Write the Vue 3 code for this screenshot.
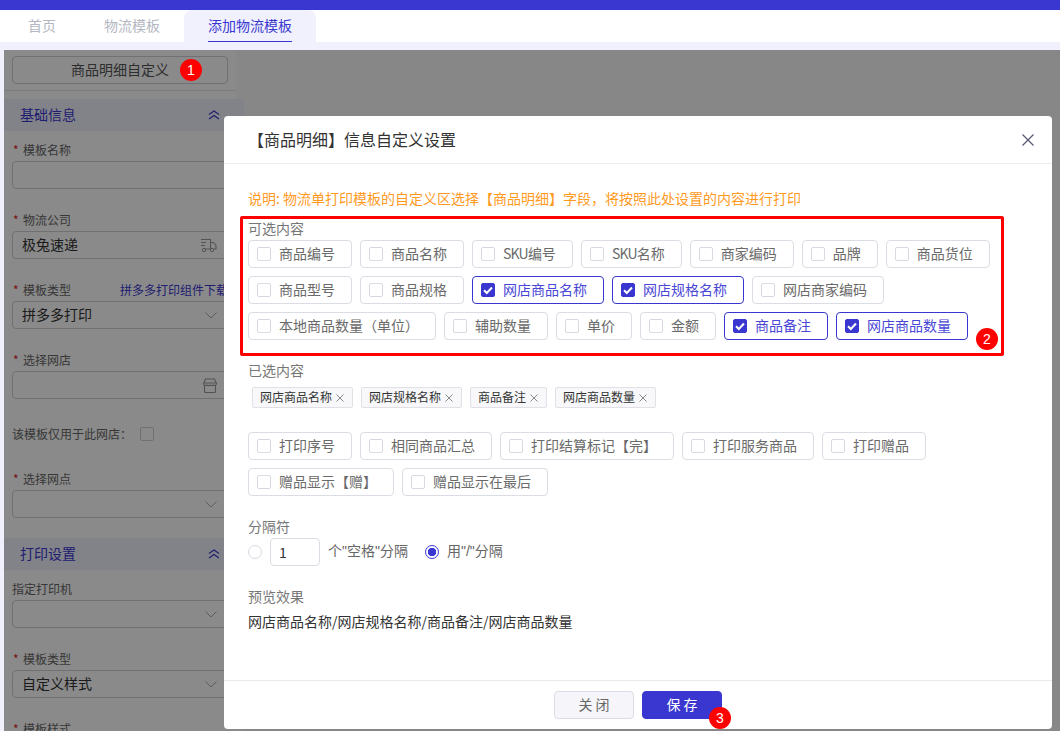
<script setup>
const available = [
  [{t:'商品编号'},{t:'商品名称'},{p:'SKU',t:'编号'},{p:'SKU',t:'名称'},{t:'商家编码'},{t:'品牌'},{t:'商品货位'}],
  [{t:'商品型号'},{t:'商品规格'},{t:'网店商品名称',c:1},{t:'网店规格名称',c:1},{t:'网店商家编码'}],
  [{t:'本地商品数量（单位）'},{t:'辅助数量'},{t:'单价'},{t:'金额'},{t:'商品备注',c:1},{t:'网店商品数量',c:1}]
]
const selected = ['网店商品名称','网店规格名称','商品备注','网店商品数量']
const extra = [
  ['打印序号','相同商品汇总','打印结算标记【完】','打印服务商品','打印赠品'],
  ['赠品显示【赠】','赠品显示在最后']
]
</script>

<template>
  <div class="page">
    <div class="topbar"></div>
    <nav class="tabs">
      <span class="tab">首页</span>
      <span class="tab">物流模板</span>
      <span class="tab active"><span class="tab-label">添加物流模板</span></span>
    </nav>
    <div class="tab-gap"></div>
    <main class="content">
      <aside class="side">
        <div class="side-top">
          <div class="side-btn">商品明细自定义</div>
        </div>
        <div class="section-head">
          <span>基础信息</span>
          <svg width="12" height="10" viewBox="0 0 12 10"><path d="M1 4.500 6 1l5 3.500M1 9l5-3.500L11 9" fill="none" stroke="currentColor" stroke-width="1.100"/></svg>
        </div>
        <div class="section-body">
          <div class="field">
            <div class="label"><i>*</i>模板名称</div>
            <div class="input"></div>
          </div>
          <div class="field">
            <div class="label"><i>*</i>物流公司</div>
            <div class="input">极兔速递
              <svg width="17" height="15" viewBox="0 0 17 15"><path d="M1 1.500h9.500v9.500H5M1 4.500h5M1 7.500h4M10.500 4.500h3l2.500 3v3.500h-2M10.500 11h-1" fill="none" stroke="#999" stroke-width="1.100"/><circle cx="4" cy="12" r="1.700" fill="none" stroke="#999"/><circle cx="12" cy="12" r="1.700" fill="none" stroke="#999"/></svg>
            </div>
          </div>
          <div class="field">
            <div class="label"><i>*</i>模板类型<span class="link">拼多多打印组件下载</span></div>
            <div class="input">拼多多打印<svg width="12" height="7" viewBox="0 0 12 7"><path d="M.5.500 6 6l5.500-5.500" fill="none" stroke="#aaa"/></svg></div>
          </div>
          <div class="field">
            <div class="label"><i>*</i>选择网店</div>
            <div class="input">
              <svg width="14" height="15" viewBox="0 0 14 15"><path d="M2.500 1h9l2 4.500a2 2 0 0 1-3.300 1.500 2.500 2.500 0 0 1-3.200 0 2.500 2.500 0 0 1-3.200 0A2 2 0 0 1 .5 5.500zM1.500 7v6.500a1 1 0 0 0 1 1h9a1 1 0 0 0 1-1V7M.5 5h13" fill="none" stroke="#999" stroke-width="1.100"/></svg>
            </div>
          </div>
          <div class="only-row">该模板仅用于此网店：<span class="mini-check"></span></div>
          <div class="field">
            <div class="label"><i>*</i>选择网点</div>
            <div class="input"><svg width="12" height="7" viewBox="0 0 12 7"><path d="M.5.500 6 6l5.500-5.500" fill="none" stroke="#aaa"/></svg></div>
          </div>
        </div>
        <div class="section-head">
          <span>打印设置</span>
          <svg width="12" height="10" viewBox="0 0 12 10"><path d="M1 4.500 6 1l5 3.500M1 9l5-3.500L11 9" fill="none" stroke="currentColor" stroke-width="1.100"/></svg>
        </div>
        <div class="section-body">
          <div class="field">
            <div class="label plain">指定打印机</div>
            <div class="input"><svg width="12" height="7" viewBox="0 0 12 7"><path d="M.5.500 6 6l5.500-5.500" fill="none" stroke="#aaa"/></svg></div>
          </div>
          <div class="field">
            <div class="label"><i>*</i>模板类型</div>
            <div class="input">自定义样式<svg width="12" height="7" viewBox="0 0 12 7"><path d="M.5.500 6 6l5.500-5.500" fill="none" stroke="#aaa"/></svg></div>
          </div>
          <div class="field">
            <div class="label"><i>*</i>模板样式</div>
          </div>
        </div>
      </aside>
    </main>

    <div class="mask"></div>

    <section class="dialog">
      <header class="dialog-head">
        <span>【商品明细】信息自定义设置</span>
        <svg width="14" height="14" viewBox="0 0 14 14"><path d="M1.500 1.500l11 11m0-11-11 11" fill="none" stroke="#5b5b78" stroke-width="1.300"/></svg>
      </header>
      <div class="dialog-body">
        <p class="note">说明: 物流单打印模板的自定义区选择【商品明细】字段，将按照此处设置的内容进行打印</p>
        <div class="title t1">可选内容</div>
        <div class="chips">
          <div v-for="(r, i) in available" :key="i" class="chip-row">
            <label v-for="c in r" :key="(c.p || '') + c.t" class="chip" :class="{ on: c.c }">
              <span class="box">
                <svg v-if="c.c" width="14" height="14" viewBox="0 0 14 14"><path d="M3 7.200 5.800 10 11 4.500" fill="none" stroke="#fff" stroke-width="2"/></svg>
              </span>
              <span><span v-if="c.p" class="latin">{{ c.p }}</span>{{ c.t }}</span>
            </label>
          </div>
        </div>
        <div class="title t2">已选内容</div>
        <div class="tags">
          <span v-for="s in selected" :key="s" class="tag"><span>{{ s }}</span>
            <svg width="8" height="8" viewBox="0 0 8 8"><path d="M.5.500l7 7m0-7-7 7" fill="none" stroke="#888"/></svg>
          </span>
        </div>
        <div class="chips extra">
          <div v-for="(r, i) in extra" :key="i" class="chip-row">
            <label v-for="c in r" :key="c" class="chip"><span class="box"></span><span>{{ c }}</span></label>
          </div>
        </div>
        <div class="title t3">分隔符</div>
        <div class="sep">
          <span class="radio"></span>
          <span class="num">1</span>
          <span class="sep-a">个"空格"分隔</span>
          <span class="radio on"></span>
          <span class="sep-b">用"/"分隔</span>
        </div>
        <div class="title t3">预览效果</div>
        <p class="preview">网店商品名称/网店规格名称/商品备注/网店商品数量</p>
      </div>
      <footer class="dialog-foot">
        <button class="btn">关 闭</button>
        <button class="btn primary">保 存</button>
      </footer>
    </section>

    <div class="red-box"></div>
    <span class="badge b1">1</span>
    <span class="badge b2">2</span>
    <span class="badge b3">3</span>
  </div>
</template>

<style scoped>
.page {
  position: relative;
  width: 1060px;
  height: 731px;
  overflow: hidden;
  background: #f0f1fd;
  font-family: "Noto Sans CJK SC", sans-serif;
  font-size: 14px;
  line-height: 22px;
  color: #333;
}
.topbar { height: 10px; background: #3a37d0; }
.tabs {
  display: flex;
  height: 32px;
  padding-left: 4px;
  background: #fff;
}
.tab { padding: 0 24px; line-height: 30px; color: #b4b7c2; }
.tab.active {
  background: #f0f1fd;
  color: #3a37d0;
  border-radius: 8px 8px 0 0;
}
.tab-label { display: block; height: 32px; border-bottom: 1px solid #3a37d0; box-sizing: border-box; }
.tab-gap { height: 8px; }
.content {
  height: 681px;
  margin-left: 4px;
  background: #fafafa;
  overflow: hidden;
}
.side { width: 240px; }
.side-top {
  width: 232px;
  height: 49px;
  box-sizing: border-box;
  padding-top: 6px;
  background: #fff;
}
.side-top::after {
  content: "";
  display: block;
  height: 1px;
  margin-top: 6px;
  background: #e4e4ec;
}
.side-btn {
  margin-left: 8px;
  width: 216px;
  height: 28px;
  box-sizing: border-box;
  border: 1px solid #cfcfd8;
  border-radius: 4px;
  text-align: center;
  line-height: 24px;
  color: #555;
}
.section-head {
  display: flex;
  align-items: center;
  justify-content: space-between;
  height: 32px;
  padding: 0 24px 0 16px;
  background: #f0f1fd;
  color: #3a37d0;
}
.section-head span { margin-bottom: 2px; }
.section-body { background: #fff; padding: 8px 8px 20px; }
.section-body:last-child { padding-bottom: 0; }
.field + .field, .only-row + .field { margin-top: 20px; }
.label {
  position: relative;
  height: 22px;
  font-size: 12px;
  line-height: 22px;
  color: #666;
  padding-left: 11px;
  display: flex;
}
.label.plain { padding-left: 0; }
.label i {
  position: absolute;
  left: 1px;
  top: 0;
  font-style: normal;
  color: #e02020;
}
.link { margin-left: 49px; color: #3a37d0; white-space: nowrap; }
.input {
  display: flex;
  align-items: center;
  justify-content: space-between;
  width: 216px;
  height: 28px;
  box-sizing: border-box;
  border: 1px solid #cfcfd8;
  border-radius: 4px;
  padding: 0 10px 2px 9px;
  color: #333;
}
.input svg { margin: 2px 0 0 auto; flex: none; }
.only-row {
  display: flex;
  align-items: center;
  height: 29px;
  margin-top: 20px;
  font-size: 12px;
  color: #666;
}
.mini-check {
  width: 14px;
  height: 14px;
  box-sizing: border-box;
  margin-left: 8px;
  border: 1px solid #cfcfd8;
  border-radius: 2px;
}
.mask {
  position: absolute;
  left: 4px;
  top: 50px;
  right: 0;
  bottom: 0;
  background: rgba(0, 0, 0, .46);
}
.dialog {
  position: absolute;
  left: 224px;
  top: 116px;
  width: 828px;
  height: 613px;
  display: flex;
  flex-direction: column;
  background: #fff;
  border-radius: 4px;
}
.dialog-head {
  display: flex;
  align-items: center;
  justify-content: space-between;
  height: 48px;
  box-sizing: border-box;
  padding: 0 17px 0 24px;
  border-bottom: 1px solid #eeeef2;
  font-size: 16px;
  color: #333;
}
.dialog-head span { margin-bottom: 2px; }
.dialog-body { flex: 1; padding: 24px 24px 0; }
.note { margin: 0; padding-bottom: 2px; line-height: 20px; color: #ff9a1f; }
.title { color: #777; line-height: 20px; padding-bottom: 2px; }
.t1 { margin-top: 8px; }
.t2, .t3 { margin-top: 20px; }
.chips { display: flex; flex-direction: column; gap: 8px; }
.chips.extra { margin-top: 24px; }
.chip-row { display: flex; gap: 8px; }
.chip {
  display: flex;
  align-items: center;
  height: 28px;
  box-sizing: border-box;
  padding: 0 16px 2px 8px;
  border: 1px solid #dcdce4;
  border-radius: 4px;
  color: #6a6a6a;
  white-space: nowrap;
}
.latin { letter-spacing: -.8px; }
.box {
  width: 14px;
  height: 14px;
  box-sizing: border-box;
  margin: 2px 8px 0 0;
  border: 1px solid #d9d9e2;
  border-radius: 2px;
  flex: none;
}
.box svg { display: block; margin: -1px; }
.chip.on { border-color: #3a37d0; color: #4a47d6; }
.chip.on .box { background: #3a37d0; border-color: #3a37d0; }
.tags { display: flex; gap: 8px; margin: 5px 0 0 4px; }
.tag {
  display: flex;
  align-items: center;
  height: 21px;
  box-sizing: border-box;
  padding: 0 8px 0 7px;
  background: #f8f8fa;
  border: 1px solid #e0e0e6;
  border-radius: 2px;
  font-size: 12px;
  color: #333;
}
.tag span { margin-bottom: 1px; }
.tag svg { margin-left: 4px; }
.sep { display: flex; align-items: center; height: 28px; }
.radio {
  width: 14px;
  height: 14px;
  box-sizing: border-box;
  border: 1px solid #d9d9e2;
  border-radius: 50%;
  flex: none;
}
.radio.on {
  margin-left: 17px;
  border-color: #3a37d0;
  background: radial-gradient(circle, #3a37d0 0 4px, #fff 4.500px);
}
.num {
  width: 50px;
  height: 28px;
  box-sizing: border-box;
  margin-left: 8px;
  padding-left: 8px;
  border: 1px solid #dcdce4;
  border-radius: 4px;
  line-height: 26px;
  color: #333;
}
.sep-a, .sep-b {
  margin: 0 0 2px 8px;
  font-family: "Liberation Sans", "Noto Sans CJK SC", sans-serif;
  color: #666;
}
.preview { margin: 0; padding-top: 3px; line-height: 20px; color: #333; }
.dialog-foot {
  display: flex;
  justify-content: center;
  gap: 8px;
  height: 49px;
  box-sizing: border-box;
  padding-top: 10px;
  border-top: 1px solid #e8e8ee;
}
.btn {
  width: 80px;
  height: 28px;
  padding: 0 0 2px;
  box-sizing: border-box;
  border: 1px solid #dcdce6;
  border-radius: 4px;
  background: #f5f5fa;
  color: #666;
  font: inherit;
}
.btn.primary {
  background: #3a37d0;
  border-color: #3a37d0;
  color: #fff;
}
.red-box {
  position: absolute;
  left: 240px;
  top: 216px;
  width: 764px;
  height: 140px;
  box-sizing: border-box;
  border: 3px solid #f00;
  border-radius: 2px;
}
.badge {
  position: absolute;
  width: 22px;
  height: 22px;
  border-radius: 50%;
  background: #f00;
  color: #fff;
  text-align: center;
  font-family: "Liberation Sans", sans-serif;
  font-size: 14px;
  line-height: 22px;
}
.b1 { left: 180px; top: 59px; }
.b2 { left: 976px; top: 328px; }
.b3 { left: 709px; top: 707px; }
</style>

<style>
html, body { margin: 0; background: #f0f1fd; overflow: hidden; }
</style>
